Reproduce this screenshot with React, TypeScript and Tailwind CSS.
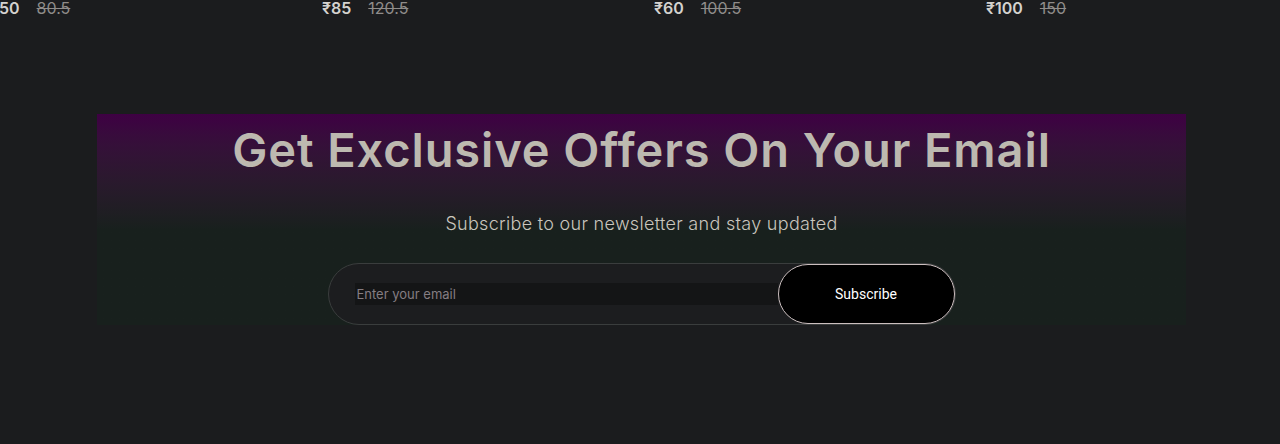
import React from 'react';

const prices = [
  { now: '₹50', was: '80.5' },
  { now: '₹85', was: '120.5' },
  { now: '₹60', was: '100.5' },
  { now: '₹100', was: '150' },
];

const App: React.FC = () => {
  return (
    <div className="min-h-[444px] w-full overflow-hidden bg-[#1b1c1e]" style={{ fontFamily: 'Inter, "Noto Sans", sans-serif' }}>
      {/* price row of the grid above */}
      <div className="flex ml-[-10px] mt-[-2px] h-[20px]">
        {prices.map((p) => (
          <div key={p.now} className="w-[332px] shrink-0 flex items-center gap-[17px] text-[16px] leading-[20px]">
            <span className="font-semibold text-[#d4d2cf]">{p.now}</span>
            <span className="text-[#8f8c8a] line-through">{p.was}</span>
          </div>
        ))}
      </div>

      {/* newsletter */}
      <div className="ml-[97px] w-[1089px] mt-[96px] h-[211px] bg-linear-to-b from-[#3e0043] to-[#18201d] to-55% flex flex-col items-center">
        <h2 className="mt-[7px] text-[47px] leading-[58px] font-semibold tracking-[0.9px] text-[#bdb9b0]">
          Get Exclusive Offers On Your Email
        </h2>
        <p className="mt-[33px] text-[18px] leading-[24px] font-light tracking-[0.3px] text-[#c9c5bd]">
          Subscribe to our newsletter and stay updated
        </p>
        <div className="mt-[27px] shrink-0 w-[628px] h-[62px] rounded-full border border-[#3a3d3d] bg-[#1c1d1f] flex items-center pl-[26px]">
          <input
            type="email"
            placeholder="Enter your email"
            className="flex-1 h-[22px] bg-[#141516] px-[2px] text-[13px] text-[#c9c5bd] placeholder:text-[#857d82] outline-none"
          />
          <button
            className="w-[177px] h-[60px] rounded-full bg-black border-[1.5px] border-[#cbbfbf] text-white text-[14px]"
            style={{ fontFamily: 'Roboto, Arial, sans-serif' }}
          >
            Subscribe
          </button>
        </div>
      </div>
    </div>
  );
};

export default App;
